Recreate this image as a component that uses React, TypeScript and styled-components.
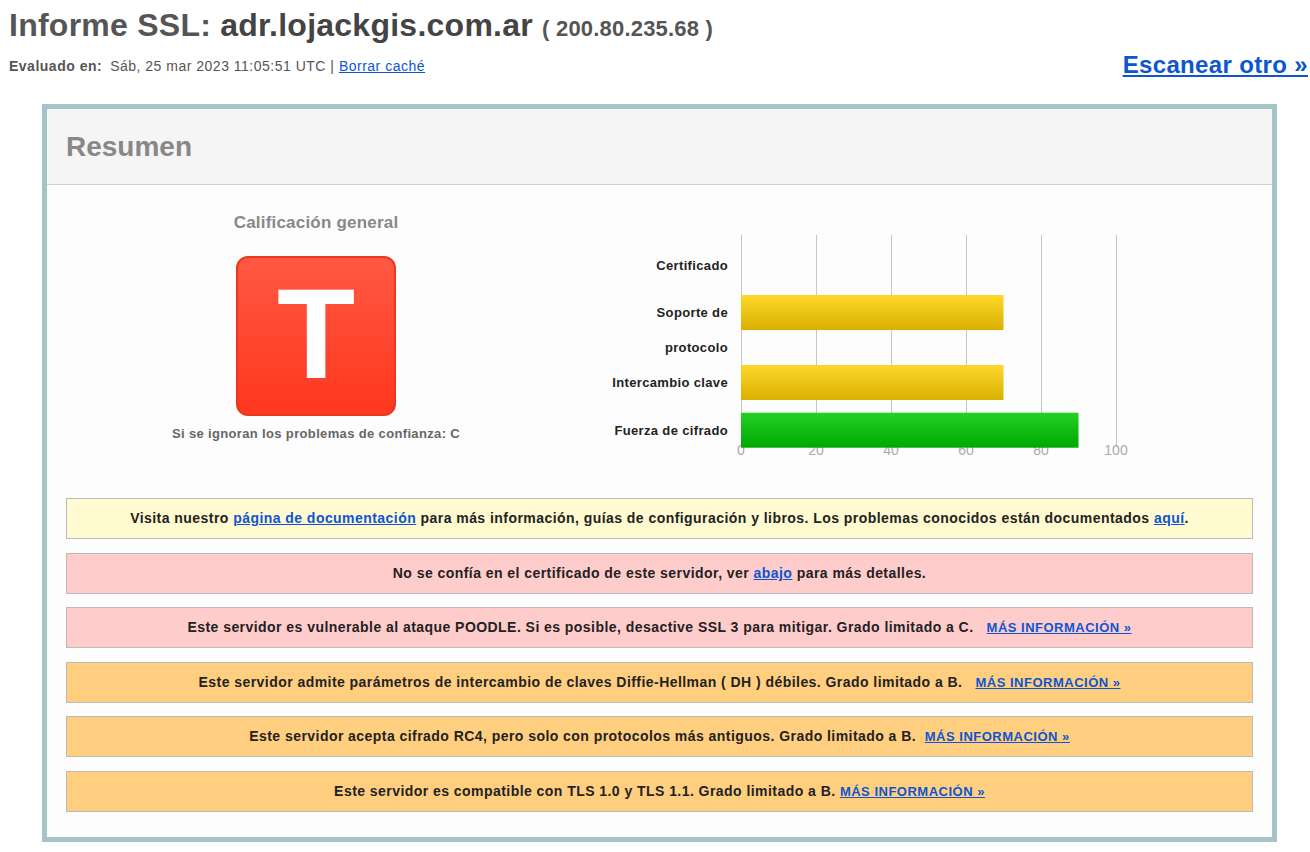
import React from "react";
import styled, { createGlobalStyle } from "styled-components";

const GlobalStyle = createGlobalStyle`
  html, body { margin: 0; padding: 0; background: #ffffff; }
  body { font-family: "Liberation Sans", Arial, Helvetica, sans-serif; color: #222; }
`;

const Page = styled.div`
  padding: 5px 2px 0 9px;
`;

const TopBar = styled.div`
  display: flex;
  justify-content: space-between;
  align-items: flex-start;
`;

const TitleBlock = styled.div`
  display: flex;
  flex-direction: column;
`;

const Title = styled.h1`
  margin: 0;
  font-size: 32px;
  line-height: 40px;
  font-weight: bold;
  letter-spacing: 0.25px;
  color: #555;
  white-space: nowrap;
`;

const Host = styled.span`
  color: #444;
`;

const Ip = styled.span`
  font-size: 22px;
  line-height: 1;
  letter-spacing: 0.2px;
  color: #555;
`;

const Evaluated = styled.div`
  margin-top: 12px;
  font-size: 14px;
  line-height: 18px;
  letter-spacing: 0.5px;
  color: #555;
`;

const EvalLabel = styled.b`
  margin-right: 8px;
`;

const Link = styled.a`
  color: #0d55d3;
  text-decoration: underline;
`;

const ScanLink = styled.a`
  margin: 46px 0 -10px;
  font-size: 24px;
  line-height: 28px;
  font-weight: bold;
  letter-spacing: 0.35px;
  color: #0d55d3;
  text-decoration: underline;
  white-space: nowrap;
`;

const ReportBox = styled.section`
  margin: 29px 31px 0 33px;
  border: 5px solid #a6c4c8;
  background: #fdfdfd;
`;

const BoxHeader = styled.div`
  background: #f5f5f5;
  border-bottom: 1px solid #c3d4d4;
  padding: 22px 19px 21px;
  font-size: 28px;
  line-height: 32px;
  font-weight: bold;
  color: #888;
`;

const BoxBody = styled.div`
  padding: 0 19px 25px;
`;

const SummaryRow = styled.div`
  display: flex;
  align-items: flex-start;
`;

const GradeColumn = styled.div`
  width: 500px;
  padding-top: 28px;
  display: flex;
  flex-direction: column;
  align-items: center;
`;

const GradeTitle = styled.div`
  font-size: 17px;
  line-height: 20px;
  font-weight: bold;
  letter-spacing: 0.2px;
  color: #888;
`;

const GradeBox = styled.div`
  margin-top: 23px;
  width: 160px;
  height: 160px;
  box-sizing: border-box;
  border: 2px solid #e8381f;
  border-radius: 12px;
  background: linear-gradient(to bottom, #ff5843, #ff371d);
  display: flex;
  align-items: center;
  justify-content: center;
  color: #ffffff;
  font-size: 128px;
  line-height: 1;
  font-weight: bold;
`;

const GradeLetter = styled.span`
  display: block;
  margin-bottom: 4px;
`;

const GradeNote = styled.div`
  margin-top: 10px;
  font-size: 13px;
  line-height: 16px;
  font-weight: bold;
  letter-spacing: 0.35px;
  color: #666;
`;

const ChartColumn = styled.div`
  margin-left: 24px;
  padding-top: 45px;
`;

const AlertList = styled.div`
  margin-top: 32px;
  display: flex;
  flex-direction: column;
  gap: 13.6px;
`;

const Alert = styled.div<{ $kind: "info" | "error" | "warning" }>`
  height: 41px;
  box-sizing: border-box;
  border: 1px solid #bbbbbb;
  background: ${(p) =>
    p.$kind === "info" ? "#fffad0" : p.$kind === "error" ? "#ffcccc" : "#ffcf7f"};
  padding: 0 10px;
  font-size: 14px;
  line-height: 39px;
  font-weight: bold;
  letter-spacing: 0.45px;
  color: #222;
  text-align: center;
  white-space: nowrap;
`;

const MoreInfo = styled.a`
  font-size: 13px;
  letter-spacing: 0.5px;
  color: #0d55d3;
  text-decoration: underline;
  text-transform: uppercase;
`;

const Chart: React.FC = () => {
  const x0 = 151;
  const unit = 3.75;
  const ticks = [0, 20, 40, 60, 80, 100];
  const bars = [
    { y: 65, v: 70, kind: "yellow" },
    { y: 135, v: 70, kind: "yellow" },
    { y: 182.7, v: 90, kind: "green" },
  ];
  const labels = [
    { y: 39.6, t: "Certificado" },
    { y: 86.6, t: "Soporte de" },
    { y: 121.6, t: "protocolo" },
    { y: 156.6, t: "Intercambio clave" },
    { y: 204.6, t: "Fuerza de cifrado" },
  ];
  return (
    <svg width="560" height="232" viewBox="0 0 560 232">
      <defs>
        <linearGradient id="gYellow" x1="0" y1="0" x2="0" y2="1">
          <stop offset="0" stopColor="#fdd82b" />
          <stop offset="1" stopColor="#dab000" />
        </linearGradient>
        <linearGradient id="gGreen" x1="0" y1="0" x2="0" y2="1">
          <stop offset="0" stopColor="#24cf26" />
          <stop offset="1" stopColor="#00a800" />
        </linearGradient>
      </defs>
      {ticks.map((t) => (
        <line
          key={"g" + t}
          x1={x0 + t * unit + 0.5}
          x2={x0 + t * unit + 0.5}
          y1={5}
          y2={217}
          stroke="#c6c6c6"
          strokeWidth={1}
        />
      ))}
      {ticks.map((t) => (
        <text
          key={"t" + t}
          x={x0 + t * unit}
          y={225}
          textAnchor="middle"
          fontFamily="Liberation Sans, Arial, sans-serif"
          fontSize={14}
          fill="#aaaaaa"
        >
          {t}
        </text>
      ))}
      {bars.map((b, i) => (
        <rect
          key={"b" + i}
          x={x0}
          y={b.y}
          width={b.v * unit}
          height={35}
          fill={b.kind === "yellow" ? "url(#gYellow)" : "url(#gGreen)"}
        />
      ))}
      {labels.map((l) => (
        <text
          key={l.t}
          x={138}
          y={l.y}
          textAnchor="end"
          fontFamily="Liberation Sans, Arial, sans-serif"
          fontSize={13}
          fontWeight="bold"
          letterSpacing="0.35"
          fill="#222"
        >
          {l.t}
        </text>
      ))}
    </svg>
  );
};

const nb = (n: number) => "\u00a0".repeat(n);

export default function App() {
  return (
    <>
      <GlobalStyle />
      <Page>
        <TopBar>
          <TitleBlock>
            <Title>
              Informe SSL: <Host>adr.lojackgis.com.ar</Host> <Ip>( 200.80.235.68 )</Ip>
            </Title>
            <Evaluated>
              <EvalLabel>Evaluado en:</EvalLabel>Sáb, 25 mar 2023 11:05:51 UTC |{" "}
              <Link href="#">Borrar caché</Link>
            </Evaluated>
          </TitleBlock>
          <ScanLink href="#">Escanear otro »</ScanLink>
        </TopBar>

        <ReportBox>
          <BoxHeader>Resumen</BoxHeader>
          <BoxBody>
            <SummaryRow>
              <GradeColumn>
                <GradeTitle>Calificación general</GradeTitle>
                <GradeBox>
                  <GradeLetter>T</GradeLetter>
                </GradeBox>
                <GradeNote>Si se ignoran los problemas de confianza: C</GradeNote>
              </GradeColumn>
              <ChartColumn>
                <Chart />
              </ChartColumn>
            </SummaryRow>

            <AlertList>
              <Alert $kind="info">
                Visita nuestro <Link href="#">página de documentación</Link> para más
                información, guías de configuración y libros. Los problemas conocidos están
                documentados <Link href="#">aquí</Link>.
              </Alert>
              <Alert $kind="error">
                No se confía en el certificado de este servidor, ver{" "}
                <Link href="#">abajo</Link> para más detalles.
              </Alert>
              <Alert $kind="error">
                Este servidor es vulnerable al ataque POODLE. Si es posible, desactive SSL 3
                para mitigar. Grado limitado a C.{nb(3)}
                <MoreInfo href="#">Más información »</MoreInfo>
              </Alert>
              <Alert $kind="warning">
                Este servidor admite parámetros de intercambio de claves Diffie-Hellman ( DH )
                débiles. Grado limitado a B.{nb(3)}
                <MoreInfo href="#">Más información »</MoreInfo>
              </Alert>
              <Alert $kind="warning">
                Este servidor acepta cifrado RC4, pero solo con protocolos más antiguos. Grado
                limitado a B.{nb(2)}
                <MoreInfo href="#">Más información »</MoreInfo>
              </Alert>
              <Alert $kind="warning">
                Este servidor es compatible con TLS 1.0 y TLS 1.1. Grado limitado a B.{nb(1)}
                <MoreInfo href="#">Más información »</MoreInfo>
              </Alert>
            </AlertList>
          </BoxBody>
        </ReportBox>
      </Page>
    </>
  );
}
